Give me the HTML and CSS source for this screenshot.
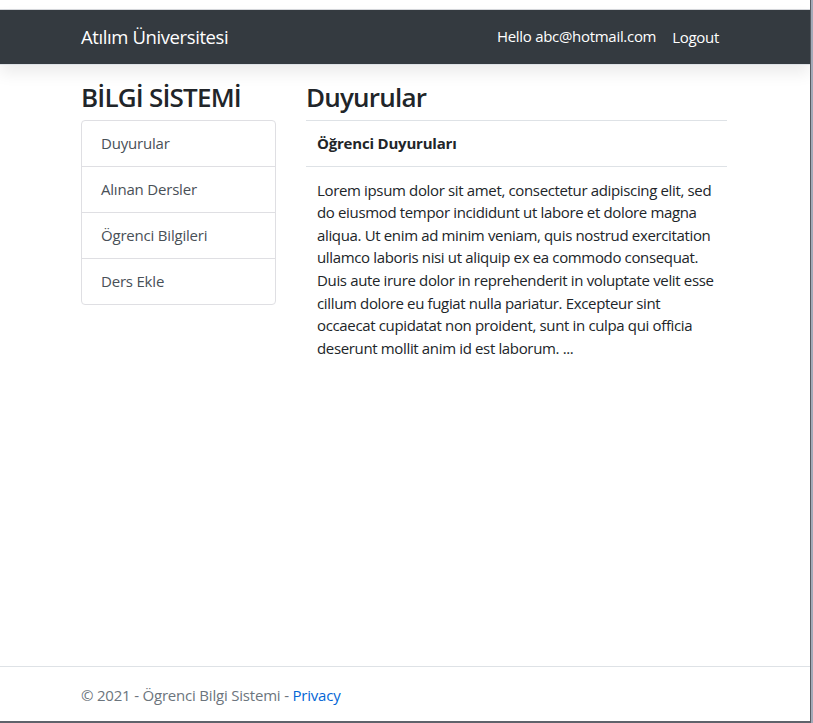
FILE: index.html
```html
<!DOCTYPE html>
<html lang="tr">
<head>
<meta charset="utf-8">
<title>Öğrenci Bilgi Sistemi</title>
<link rel="stylesheet" href="styles.css">
</head>
<body>
<div class="frame">
  <div class="topstrip"></div>
  <header class="navbar">
    <div class="container nav-inner">
      <a class="brand" href="#">Atılım Üniversitesi</a>
      <div class="nav-right">
        <span class="hello">Hello abc@hotmail.com</span>
        <a class="logout" href="#">Logout</a>
      </div>
    </div>
  </header>
  <main class="container layout">
    <aside class="sidebar">
      <h1 class="title">BİLGİ SİSTEMİ</h1>
      <div class="list-group">
        <a class="list-item" href="#">Duyurular</a>
        <a class="list-item" href="#">Alınan Dersler</a>
        <a class="list-item" href="#">Ögrenci Bilgileri</a>
        <a class="list-item" href="#">Ders Ekle</a>
      </div>
    </aside>
    <section class="content">
      <h1 class="title">Duyurular</h1>
      <table class="table">
        <thead>
          <tr><th>Öğrenci Duyuruları</th></tr>
        </thead>
        <tbody>
          <tr><td>Lorem ipsum dolor sit amet, consectetur adipiscing elit, sed do eiusmod tempor incididunt ut labore et dolore magna aliqua. Ut enim ad minim veniam, quis nostrud exercitation ullamco laboris nisi ut aliquip ex ea commodo consequat. Duis aute irure dolor in reprehenderit in voluptate velit esse cillum dolore eu fugiat nulla pariatur. Excepteur sint occaecat cupidatat non proident, sunt in culpa qui officia deserunt mollit anim id est laborum. ...</td></tr>
        </tbody>
      </table>
    </section>
  </main>
  <footer class="footer">
    <div class="container">© 2021 - Ögrenci Bilgi Sistemi - <a class="privacy" href="#">Privacy</a></div>
  </footer>
</div>
</body>
</html>
```

FILE: styles.css
```css
* { box-sizing: border-box; }
html, body { margin: 0; padding: 0; background: #ffffff; }
body {
  font-family: "Open Sans", "Noto Sans", "DejaVu Sans", sans-serif;
  font-size: 15px;
  line-height: 1.5;
  color: #212529;
}
a { text-decoration: none; }

.frame {
  width: 811px;
  height: 723px;
  display: flex;
  flex-direction: column;
  border-right: 1px solid #575b63;
  border-bottom: 2px solid #5f636b;
  box-shadow: 2px 0 0 #a3a9b8;
  overflow: hidden;
}

.container {
  width: 646px;
  margin-left: 81px;
}

.topstrip {
  height: 10px;
  flex: none;
  border-bottom: 1px solid #d6d8dc;
}

.navbar {
  height: 55px;
  flex: none;
  background: #343a40;
  border-bottom: 1px solid #dee2e6;
  box-shadow: 0 8px 15px rgba(0, 0, 0, 0.08);
  display: flex;
  align-items: center;
  position: relative;
  z-index: 1;
}
.nav-inner {
  display: flex;
  align-items: center;
  justify-content: space-between;
  margin-top: -1px;
}
.brand {
  color: #ffffff;
  font-size: 18.5px;
  letter-spacing: -0.4px;
}
.nav-right {
  display: flex;
  align-items: center;
  gap: 16px;
  margin-right: 8px;
}
.hello {
  color: #ffffff;
  font-size: 15px;
  letter-spacing: -0.3px;
}
.logout {
  color: #ffffff;
  font-size: 15px;
  letter-spacing: -0.3px;
  padding-top: 2px;
}

.layout {
  flex: 1;
  display: grid;
  grid-template-columns: 195px 1fr;
  align-content: start;
  column-gap: 30px;
  padding-top: 17px;
}

.title {
  margin: 0 0 7px 0;
  font-size: 26px;
  font-weight: 600;
  line-height: 1.2;
  letter-spacing: -0.8px;
  color: #212529;
}

.list-group {
  display: flex;
  flex-direction: column;
  border: 1px solid #dfdfe3;
  border-radius: 4px;
}
.list-item {
  display: block;
  height: 46px;
  padding: 11px 19px;
  color: #495057;
  border-top: 1px solid #dfdfe3;
  letter-spacing: -0.2px;
}
.list-item:first-child { border-top: none; height: 45px; }

.table {
  width: 100%;
  border-collapse: collapse;
}
.table th {
  text-align: left;
  font-weight: 700;
  padding: 11px 11px;
  border-top: 1px solid #dee2e6;
  border-bottom: 1px solid #dee2e6;
  line-height: 22.5px;
  letter-spacing: -0.2px;
}
.table td {
  padding: 12px 11px 11px;
  line-height: 22.6px;
  letter-spacing: -0.35px;
}

.footer {
  height: 55px;
  flex: none;
  border-top: 1px solid #dee2e6;
  display: flex;
  align-items: center;
  padding-top: 2px;
  color: #6c757d;
  letter-spacing: -0.2px;
}
.privacy { color: #0366d6; }
```
